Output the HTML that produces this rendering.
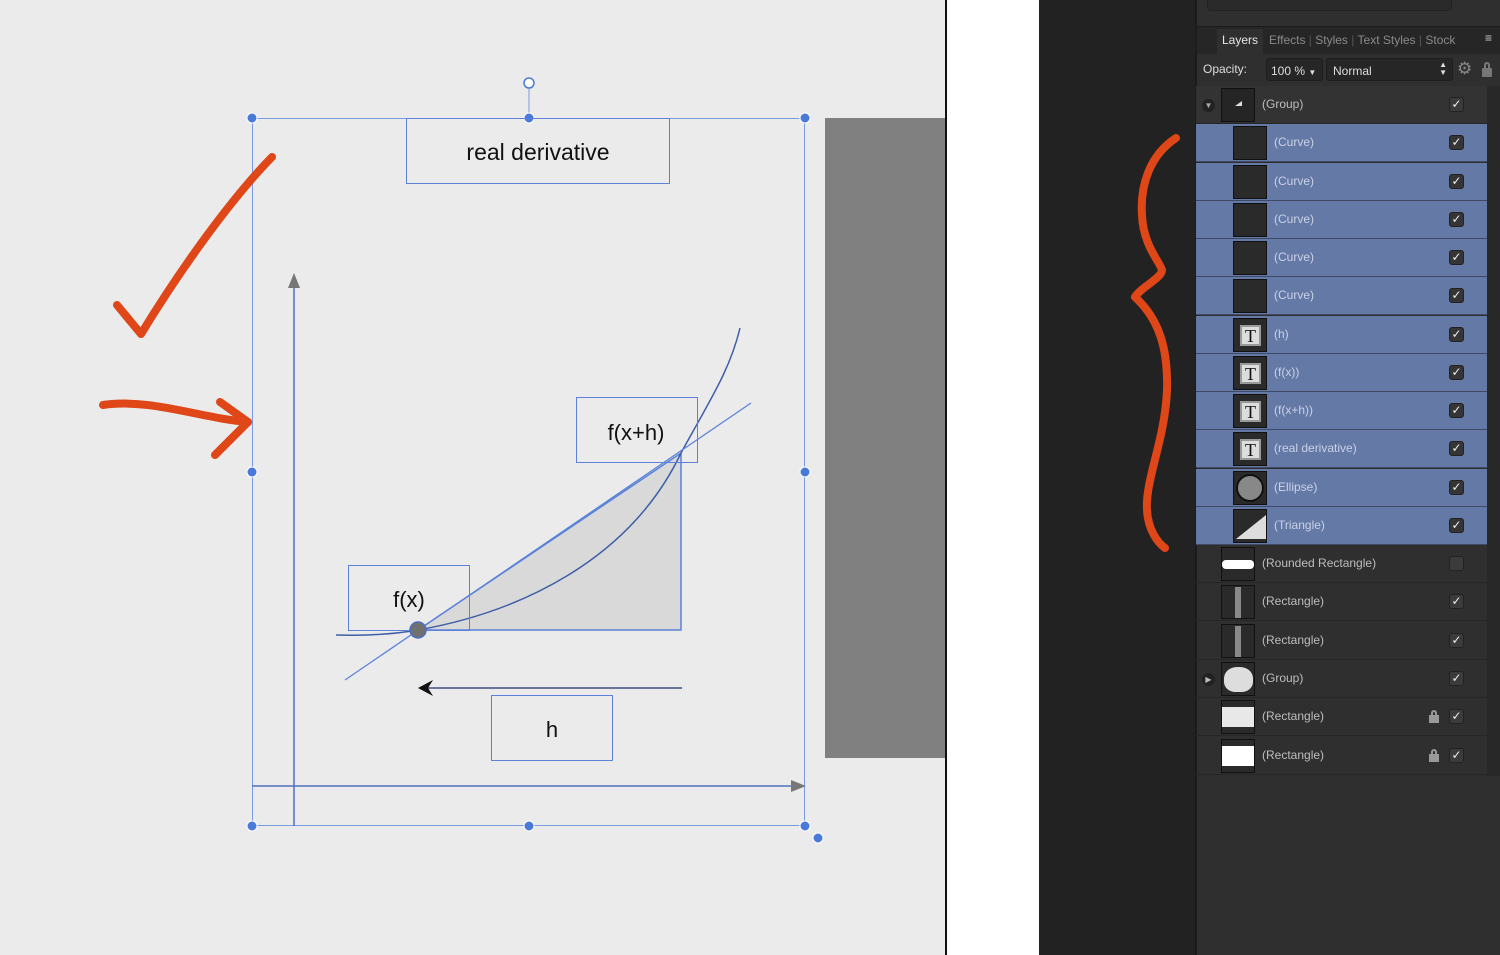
<!DOCTYPE html>
<html><head><meta charset="utf-8"><style>
*{margin:0;padding:0;box-sizing:border-box}
body{width:1500px;height:955px;overflow:hidden;position:relative;font-family:"Liberation Sans",sans-serif;background:#ebebeb}
#panel{position:absolute;left:1195px;top:0;width:305px;height:955px;background:#2f2f2f;border-left:2px solid #1c1c1c}
.row{position:absolute;left:-1px;width:291px;height:38px;border-bottom:1px solid #262626;font-size:12px;color:#bdbdbd}
.row.sel{background:#6479a6;color:#c9d2e6;border-bottom:1px solid #3e4a66}
.th{position:absolute;top:2px;width:34px;height:34px;background:#2a2a2a;border:1px solid #111}
.lbl{position:absolute;top:11px}
.cb{position:absolute;left:253px;top:11px;width:15px;height:15px;border-radius:3px;background:#3b3b3b;border:1px solid #222;color:#eee;font-size:12px;line-height:13px;text-align:center}
.row.sel .cb{background:#353535}
.T{position:absolute;left:6px;top:6px;width:21px;height:21px;background:#ddd;border:2px solid #999;font-family:"Liberation Serif",serif;font-size:18px;line-height:18px;text-align:center;color:#111}
.lock{position:absolute;left:233px;top:12px;width:10px;height:13px}
</style></head><body>
<svg width="1500" height="955" style="position:absolute;left:0;top:0">
<rect x="0" y="0" width="945" height="955" fill="#ebebeb"/>
<rect x="945" y="0" width="2" height="955" fill="#111"/>
<rect x="947" y="0" width="92" height="955" fill="#fff"/>
<rect x="1039" y="0" width="156" height="955" fill="#222"/>
<rect x="825" y="118" width="120" height="640" fill="#808080"/>
<rect x="252.5" y="118.5" width="552" height="707" fill="none" stroke="#7a9be0" stroke-width="1"/>
<line x1="529" y1="89" x2="529" y2="118" stroke="#7a9be0"/>
<circle cx="529" cy="83" r="5" fill="#fff" stroke="#4a7ad8" stroke-width="1.5"/>
<g fill="#4a7ad8" stroke="#fff" stroke-width="1">
<circle cx="252" cy="118" r="5"/><circle cx="529" cy="118" r="5"/><circle cx="805" cy="118" r="5"/>
<circle cx="252" cy="472" r="5"/><circle cx="805" cy="472" r="5"/>
<circle cx="252" cy="826" r="5"/><circle cx="529" cy="826" r="5"/><circle cx="805" cy="826" r="5"/><circle cx="818" cy="838" r="5"/>
</g>
<rect x="406.5" y="118.5" width="263" height="65" fill="none" stroke="#5b82d8"/>
<text x="538" y="160" font-family="Liberation Sans,sans-serif" font-size="23" text-anchor="middle" fill="#111">real derivative</text>
<line x1="294" y1="282" x2="294" y2="826" stroke="#4f6fbf" stroke-width="1.5"/>
<polygon points="294,273 288,288 300,288" fill="#777"/>
<line x1="252" y1="786" x2="796" y2="786" stroke="#4f6fbf" stroke-width="1.5"/>
<polygon points="806,786 791,780 791,792" fill="#777"/>
<path d="M418,630 L681,453 L681,630 Z" fill="#d9d9d9" stroke="#5b82d8" stroke-width="1.5"/>
<path d="M336,635 C370,636 395,634 418,630 C520,612 630,560 681,453 C710,400 730,370 740,328" fill="none" stroke="#3e5ea8" stroke-width="1.5"/>
<line x1="345" y1="680" x2="751" y2="403" stroke="#5b82d8" stroke-width="1.3"/>
<rect x="576.5" y="397.5" width="121" height="65" fill="none" stroke="#5b82d8"/>
<text x="636" y="440" font-family="Liberation Sans,sans-serif" font-size="22" text-anchor="middle" fill="#111">f(x+h)</text>
<rect x="348.5" y="565.5" width="121" height="65" fill="none" stroke="#5b82d8"/>
<text x="409" y="607" font-family="Liberation Sans,sans-serif" font-size="22" text-anchor="middle" fill="#111">f(x)</text>
<circle cx="418" cy="630" r="8" fill="#707070" stroke="#4a6ec0" stroke-width="1.5"/>
<line x1="428" y1="688" x2="682" y2="688" stroke="#3e4f80" stroke-width="1.5"/>
<polygon points="418,688 433,680 428,688 433,696" fill="#111"/>
<rect x="491.5" y="695.5" width="121" height="65" fill="none" stroke="#5b82d8"/>
<text x="552" y="737" font-family="Liberation Sans,sans-serif" font-size="22" text-anchor="middle" fill="#111">h</text>
<g fill="none" stroke="#df4618" stroke-width="8" stroke-linecap="round" stroke-linejoin="round">
<path d="M272,157 C230,200 180,270 141,334 L117,305"/>
<path d="M103,405 C150,398 200,418 248,422"/>
<path d="M220,402 L248,422 L215,455"/>
<path d="M1176,138 C1150,155 1140,185 1142,215 C1143,245 1160,262 1162,270 C1162,278 1140,288 1135,297 C1160,320 1168,350 1167,390 C1165,440 1145,480 1147,510 C1148,530 1158,543 1165,548"/>
</g>
</svg>
<div id="panel">
<div style="position:absolute;left:10px;top:-4px;width:245px;height:15px;border:1px solid #222;border-radius:4px;background:#2a2a2a"></div>
<div style="position:absolute;left:0;top:26px;width:303px;height:28px;background:#262626;border-top:1px solid #1c1c1c"></div>
<div style="position:absolute;left:20px;top:29px;width:46px;height:25px;background:#2f2f2f"></div>
<div style="position:absolute;left:25px;top:33px;font-size:12px;color:#e6e6e6">Layers</div>
<div style="position:absolute;left:72px;top:33px;font-size:12px;color:#8a8a8a;white-space:nowrap">Effects <span style="color:#555">|</span> Styles <span style="color:#555">|</span> Text Styles <span style="color:#555">|</span> Stock</div>
<div style="position:absolute;left:288px;top:31px;font-size:12px;color:#ccc">≡</div>
<div style="position:absolute;left:6px;top:62px;font-size:12px;color:#ddd">Opacity:</div>
<div style="position:absolute;left:69px;top:58px;width:57px;height:23px;background:#262626;border:1px solid #1e1e1e;border-radius:3px;font-size:12px;color:#ddd;padding:5px 4px">100 % <span style="font-size:8px">▼</span></div>
<div style="position:absolute;left:129px;top:58px;width:127px;height:23px;background:#262626;border:1px solid #1e1e1e;border-radius:3px;font-size:12px;color:#ddd;padding:5px 6px">Normal<span style="position:absolute;right:5px;top:2px;font-size:8px;line-height:8px">▲<br>▼</span></div>
<div style="position:absolute;left:260px;top:59px;font-size:17px;color:#888">⚙</div>
<div style="position:absolute;left:285px;top:68px;width:10px;height:9px;background:#777;border-radius:1px"></div>
<div style="position:absolute;left:287px;top:62px;width:6px;height:8px;border:2px solid #777;border-bottom:none;border-radius:3px 3px 0 0"></div>
<div style="position:absolute;left:290px;top:86px;width:13px;height:690px;background:#282828"></div>

<div class="row" style="top:86px;background:#333"><div style="position:absolute;left:6px;top:13px;width:13px;height:13px;border-radius:50%;background:#222;color:#aaa;font-size:8px;text-align:center;line-height:13px">▼</div><div class="th" style="left:25px;background:#252525"><div style="position:absolute;left:13px;top:12px;width:0;height:0;border-left:7px solid transparent;border-bottom:5px solid #ddd"></div></div><span class="lbl" style="left:66px">(Group)</span><div class="cb">✓</div></div>

<div class="row sel" style="top:124px"><div class="th" style="left:37px"></div><span class="lbl" style="left:78px">(Curve)</span><div class="cb">✓</div></div>
<div class="row sel" style="top:163px"><div class="th" style="left:37px"></div><span class="lbl" style="left:78px">(Curve)</span><div class="cb">✓</div></div>
<div class="row sel" style="top:201px"><div class="th" style="left:37px"></div><span class="lbl" style="left:78px">(Curve)</span><div class="cb">✓</div></div>
<div class="row sel" style="top:239px"><div class="th" style="left:37px"></div><span class="lbl" style="left:78px">(Curve)</span><div class="cb">✓</div></div>
<div class="row sel" style="top:277px"><div class="th" style="left:37px"></div><span class="lbl" style="left:78px">(Curve)</span><div class="cb">✓</div></div>
<div class="row sel" style="top:316px"><div class="th" style="left:37px"><div class="T">T</div></div><span class="lbl" style="left:78px">(h)</span><div class="cb">✓</div></div>
<div class="row sel" style="top:354px"><div class="th" style="left:37px"><div class="T">T</div></div><span class="lbl" style="left:78px">(f(x))</span><div class="cb">✓</div></div>
<div class="row sel" style="top:392px"><div class="th" style="left:37px"><div class="T">T</div></div><span class="lbl" style="left:78px">(f(x+h))</span><div class="cb">✓</div></div>
<div class="row sel" style="top:430px"><div class="th" style="left:37px"><div class="T">T</div></div><span class="lbl" style="left:78px">(real derivative)</span><div class="cb">✓</div></div>
<div class="row sel" style="top:469px"><div class="th" style="left:37px"><div style="position:absolute;left:2px;top:2px;width:28px;height:28px;border-radius:50%;background:#888;border:2px solid #111"></div></div><span class="lbl" style="left:78px">(Ellipse)</span><div class="cb">✓</div></div>
<div class="row sel" style="top:507px"><div class="th" style="left:37px"><div style="position:absolute;left:2px;top:5px;width:0;height:0;border-left:30px solid transparent;border-bottom:24px solid #ddd"></div></div><span class="lbl" style="left:78px">(Triangle)</span><div class="cb">✓</div></div>

<div class="row" style="top:545px"><div class="th" style="left:25px"><div style="position:absolute;left:0;top:12px;width:32px;height:9px;background:#fff;border-radius:4px"></div></div><span class="lbl" style="left:66px">(Rounded Rectangle)</span><div class="cb"></div></div>
<div class="row" style="top:583px"><div class="th" style="left:25px"><div style="position:absolute;left:13px;top:1px;width:6px;height:31px;background:#888"></div></div><span class="lbl" style="left:66px">(Rectangle)</span><div class="cb">✓</div></div>
<div class="row" style="top:622px"><div class="th" style="left:25px"><div style="position:absolute;left:13px;top:1px;width:6px;height:31px;background:#888"></div></div><span class="lbl" style="left:66px">(Rectangle)</span><div class="cb">✓</div></div>
<div class="row" style="top:660px"><div style="position:absolute;left:6px;top:13px;width:13px;height:13px;border-radius:50%;background:#222;color:#bbb;font-size:8px;text-align:center;line-height:13px">▶</div><div class="th" style="left:25px"><div style="position:absolute;left:2px;top:4px;width:29px;height:25px;background:#ddd;border-radius:45% 45% 40% 40%"></div></div><span class="lbl" style="left:66px">(Group)</span><div class="cb">✓</div></div>
<div class="row" style="top:698px"><div class="th" style="left:25px"><div style="position:absolute;left:0;top:6px;width:32px;height:20px;background:#e8e8e8"></div></div><span class="lbl" style="left:66px">(Rectangle)</span><div class="lock"><div style="position:absolute;left:0;top:5px;width:10px;height:8px;background:#999"></div><div style="position:absolute;left:2px;top:0;width:6px;height:7px;border:2px solid #999;border-bottom:none;border-radius:3px 3px 0 0"></div></div><div class="cb">✓</div></div>
<div class="row" style="top:737px"><div class="th" style="left:25px"><div style="position:absolute;left:0;top:6px;width:32px;height:20px;background:#fff"></div></div><span class="lbl" style="left:66px">(Rectangle)</span><div class="lock"><div style="position:absolute;left:0;top:5px;width:10px;height:8px;background:#999"></div><div style="position:absolute;left:2px;top:0;width:6px;height:7px;border:2px solid #999;border-bottom:none;border-radius:3px 3px 0 0"></div></div><div class="cb">✓</div></div>
</div>
</body></html>
